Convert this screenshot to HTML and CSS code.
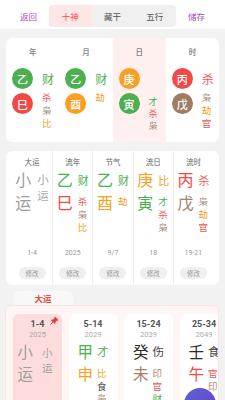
FILE: index.html
```html
<!DOCTYPE html>
<html lang="zh">
<head>
<meta charset="utf-8">
<title>排盘</title>
<link rel="stylesheet" href="styles.css">
</head>
<body>
<header class="topbar">
  <div class="nav-btn">返回</div>
  <div class="seg">
    <div class="seg-tab on">十神</div>
    <div class="seg-tab">藏干</div>
    <div class="seg-tab">五行</div>
  </div>
  <div class="nav-btn">储存</div>
</header>

<section class="pillars">
  <div class="pillar">
    <div class="p-label">年</div>
    <div class="p-row"><span class="ball green">乙</span><span class="tg c-cai">财</span></div>
    <div class="p-row"><span class="ball red">巳</span><span class="stack"><i class="c-sha">杀</i><i class="c-xiao">枭</i><i class="c-bi">比</i></span></div>
  </div>
  <div class="pillar">
    <div class="p-label">月</div>
    <div class="p-row"><span class="ball green">乙</span><span class="tg c-cai">财</span></div>
    <div class="p-row"><span class="ball orange">酉</span><span class="stack"><i class="c-jie">劫</i></span></div>
  </div>
  <div class="pillar day">
    <div class="p-label">日</div>
    <div class="p-row"><span class="ball orange">庚</span></div>
    <div class="p-row"><span class="ball green">寅</span><span class="stack tight"><i class="c-cai">才</i><i class="c-sha">杀</i><i class="c-xiao">枭</i></span></div>
  </div>
  <div class="pillar">
    <div class="p-label">时</div>
    <div class="p-row"><span class="ball red">丙</span><span class="tg c-sha">杀</span></div>
    <div class="p-row"><span class="ball brown">戊</span><span class="stack"><i class="c-xiao">枭</i><i class="c-jie">劫</i><i class="c-guan">官</i></span></div>
  </div>
</section>

<section class="flow">
  <div class="fcol">
    <div class="f-label">大运</div>
    <div class="f-body">
      <div class="xy">
        <div class="xy-big"><span>小</span><span>运</span></div>
        <div class="xy-sm"><span>小</span><span>运</span></div>
      </div>
    </div>
    <div class="f-date">1-4</div>
    <div class="f-btn">修改</div>
  </div>
  <div class="fcol">
    <div class="f-label">流年</div>
    <div class="f-body">
      <div class="f-row"><span class="big c-green">乙</span><span class="sm c-cai">财</span></div>
      <div class="f-row top"><span class="big c-red">巳</span><span class="fstack"><i class="c-sha">杀</i><i class="c-xiao">枭</i><i class="c-bi">比</i></span></div>
    </div>
    <div class="f-date">2025</div>
    <div class="f-btn">修改</div>
  </div>
  <div class="fcol">
    <div class="f-label">节气</div>
    <div class="f-body">
      <div class="f-row"><span class="big c-green">乙</span><span class="sm c-cai">财</span></div>
      <div class="f-row top"><span class="big c-orange">酉</span><span class="fstack"><i class="c-jie">劫</i></span></div>
    </div>
    <div class="f-date">9/7</div>
    <div class="f-btn">修改</div>
  </div>
  <div class="fcol">
    <div class="f-label">流日</div>
    <div class="f-body">
      <div class="f-row"><span class="big c-orange">庚</span><span class="sm c-bi">比</span></div>
      <div class="f-row top"><span class="big c-green">寅</span><span class="fstack"><i class="c-cai">才</i><i class="c-sha">杀</i><i class="c-xiao">枭</i></span></div>
    </div>
    <div class="f-date">18</div>
    <div class="f-btn">修改</div>
  </div>
  <div class="fcol">
    <div class="f-label">流时</div>
    <div class="f-body">
      <div class="f-row"><span class="big c-red">丙</span><span class="sm c-sha">杀</span></div>
      <div class="f-row top"><span class="big c-brown">戊</span><span class="fstack"><i class="c-xiao">枭</i><i class="c-jie">劫</i><i class="c-guan">官</i></span></div>
    </div>
    <div class="f-date">19-21</div>
    <div class="f-btn">修改</div>
  </div>
</section>

<nav class="tabbar"><div class="tab">大运</div></nav>

<section class="dayun">
  <div class="dy cur">
    <svg class="pin" viewBox="0 0 10 10" width="9" height="9" aria-hidden="true">
      <path fill="#e53935" d="M5.6 0.6 L9.4 4.4 L8.6 5.2 L7.7 4.9 L6 6.6 L6.2 8 L5.4 8.8 L1.2 4.6 L2 3.8 L3.4 4 L5.1 2.3 L4.8 1.4 Z"/>
      <path d="M3.3 6.7 L0.8 9.2" stroke="#e53935" stroke-width="1.1" stroke-linecap="round"/>
    </svg>
    <div class="dy-age">1-4</div>
    <div class="dy-year">2025</div>
    <div class="dxy">
      <div class="dxy-big"><span>小</span><span>运</span></div>
      <div class="dxy-sm"><span>小</span><span>运</span></div>
    </div>
  </div>
  <div class="dy">
    <div class="dy-age">5-14</div>
    <div class="dy-year">2029</div>
    <div class="d-row"><span class="dbig c-green">甲</span><span class="dsm c-cai">才</span></div>
    <div class="d-row top"><span class="dbig c-orange">申</span><span class="dstack"><i class="c-bi">比</i><i class="c-dark">食</i><i class="c-xiao">枭</i></span></div>
  </div>
  <div class="dy">
    <div class="dy-age">15-24</div>
    <div class="dy-year">2039</div>
    <div class="d-row"><span class="dbig c-black">癸</span><span class="dsm c-dark">伤</span></div>
    <div class="d-row top"><span class="dbig c-brown">未</span><span class="dstack"><i class="c-yin">印</i><i class="c-guan">官</i><i class="c-cai">财</i></span></div>
  </div>
  <div class="dy">
    <div class="dy-age">25-34</div>
    <div class="dy-year">2049</div>
    <div class="d-row"><span class="dbig c-black">壬</span><span class="dsm c-dark">食</span></div>
    <div class="d-row top"><span class="dbig c-red">午</span><span class="dstack"><i class="c-guan">官</i><i class="c-yin">印</i></span></div>
  </div>
</section>

<div class="fab"></div>
</body>
</html>
```
FILE: styles.css
```css
* { box-sizing: border-box; margin: 0; padding: 0; }
body {
  width: 225px;
  height: 400px;
  overflow: hidden;
  position: relative;
  background: #f2f2f2;
  font-family: "Noto Sans CJK SC", "Noto Sans", sans-serif;
  color: #333;
}
i { font-style: normal; display: block; }

/* top bar */
.topbar {
  height: 29px;
  background: #fff;
  display: flex;
  align-items: flex-start;
  padding: 5px 8px 0;
}
.nav-btn {
  width: 41px;
  line-height: 22px;
  text-align: center;
  font-size: 8.5px;
  color: #a24fc6;
}
.seg {
  display: flex;
  width: 127px;
  height: 22px;
  background: #f0f0f0;
  border-radius: 4px;
  overflow: hidden;
}
.seg-tab {
  flex: 1;
  display: flex;
  align-items: center;
  justify-content: center;
  font-size: 8.5px;
  color: #555;
}
.seg-tab.on { background: #fde6e6; color: #f04a4a; }

/* colours */
.c-cai { color: #4caf50; }
.c-sha { color: #ef5b5b; }
.c-xiao { color: #a58a7c; }
.c-bi { color: #f5a623; }
.c-jie { color: #f39a12; }
.c-guan { color: #e85555; }
.c-yin { color: #b48a6a; }
.c-dark { color: #444; }
.c-black { color: #2a2a2a; }
.c-green { color: #4caf50; }
.c-red { color: #f24848; }
.c-orange { color: #fba020; }
.c-brown { color: #a5806a; }

/* pillars */
.pillars {
  margin: 9px 6px 0;
  background: #fff;
  border-radius: 6px;
  display: grid;
  grid-template-columns: repeat(4, 1fr);
  overflow: hidden;
}
.pillar { padding: 8px 0 10px 6px; }
.pillar.day { background: #fff0f0; }
.p-label {
  margin: 0 0 10px -6px;
  font-size: 7.5px;
  line-height: 12px;
  color: #555;
  text-align: center;
}
.p-row { display: flex; align-items: center; gap: 9px; }
.p-row + .p-row { margin-top: 4px; align-items: flex-start; }
.ball {
  flex: none;
  width: 21px;
  height: 21px;
  border-radius: 50%;
  color: #fff;
  font-size: 11px;
  font-weight: 500;
  display: flex;
  align-items: center;
  justify-content: center;
}
.ball.green { background: #4caf50; }
.ball.red { background: #f44747; }
.ball.orange { background: #f9a024; }
.ball.brown { background: #a07c62; }
.tg { font-size: 12px; line-height: 14px; }
.stack { font-size: 9.5px; line-height: 13px; margin-top: -2px; }
.stack.tight { font-size: 9px; line-height: 12px; margin-top: 3px; }

/* flow card */
.flow {
  margin: 9px 6px 0;
  padding: 0 6px;
  background: #fff;
  border-radius: 6px;
  display: grid;
  grid-template-columns: repeat(5, 1fr);
}
.fcol {
  display: flex;
  flex-direction: column;
  align-items: center;
  padding: 5px 0 6px;
}
.fcol + .fcol { border-left: 1px solid #eee; }
.f-label { font-size: 7.5px; line-height: 12px; color: #666; }
.f-body { width: 100%; height: 80px; }
.f-row { display: flex; justify-content: center; align-items: center; gap: 5px; }
.f-row.top { align-items: flex-start; }
.big { width: 16px; font-size: 16px; line-height: 23px; text-align: center; }
.sm { width: 11px; font-size: 11px; line-height: 14px; }
.fstack { width: 11px; font-size: 9.5px; line-height: 13px; margin-top: 4px; }
.xy { display: flex; justify-content: center; gap: 6px; color: #9e9e9e; }
.xy-big { display: flex; flex-direction: column; font-size: 16px; line-height: 23px; }
.xy-sm { display: flex; flex-direction: column; font-size: 11.5px; line-height: 16.5px; margin-top: 2.5px; color: #a8a8a8; }
.f-date { font-family: Roboto, "Noto Sans", sans-serif; font-size: 7px; line-height: 11px; color: #999; }
.f-btn {
  margin-top: 8px;
  width: 27px;
  height: 12px;
  border-radius: 6px;
  background: #efefef;
  color: #999;
  font-size: 6.5px;
  display: flex;
  align-items: center;
  justify-content: center;
}

/* tabs */
.tabbar { margin: 6px 6px 0; padding-left: 7px; display: flex; }
.tab {
  width: 60px;
  height: 14px;
  background: #f8f8f8;
  border-radius: 6px 6px 0 0;
  font-size: 8.5px;
  font-weight: 700;
  color: #f04a4a;
  display: flex;
  align-items: center;
  justify-content: center;
}

/* dayun */
.dayun {
  margin: 0 6px 0 5px;
  height: 120px;
  padding: 8px 0 0 7px;
  background: #fff5f5;
  border: 1px solid #fde3e3;
  border-radius: 6px;
  display: flex;
  gap: 6.5px;
  overflow: hidden;
}
.dy {
  position: relative;
  flex: none;
  width: 49px;
  height: 110px;
  padding-top: 5px;
  background: #fff;
  border-radius: 6px;
  display: flex;
  flex-direction: column;
  align-items: center;
}
.dy.cur { background: #fddcdc; }
.pin { position: absolute; top: 2px; right: 3px; }
.dy-age { font-family: Roboto, "Noto Sans", sans-serif; font-size: 9px; font-weight: 700; line-height: 11px; color: #555; }
.dy-year { font-family: Roboto, "Noto Sans", sans-serif; font-size: 7.5px; line-height: 9.5px; color: #aaa; }
.d-row { width: 100%; display: flex; justify-content: center; align-items: center; gap: 4px; }
.d-row.top { align-items: flex-start; }
.dbig { width: 15.5px; font-size: 15.5px; line-height: 22.5px; text-align: center; }
.dsm { width: 11.5px; font-size: 11.5px; line-height: 14px; }
.dstack { width: 11.5px; font-size: 9.5px; line-height: 12.5px; margin-top: 5px; }
.dxy { display: flex; gap: 9px; margin-right: 5px; color: #9e9e9e; }
.dxy-big { display: flex; flex-direction: column; font-size: 15.5px; line-height: 22.5px; }
.dxy-sm { display: flex; flex-direction: column; font-size: 10.5px; line-height: 15px; margin-top: 5.5px; }

.fab {
  position: absolute;
  left: 184px;
  top: 388px;
  width: 32px;
  height: 32px;
  border-radius: 50%;
  background: linear-gradient(135deg, #5b63d8, #6d3fbf);
}
```
